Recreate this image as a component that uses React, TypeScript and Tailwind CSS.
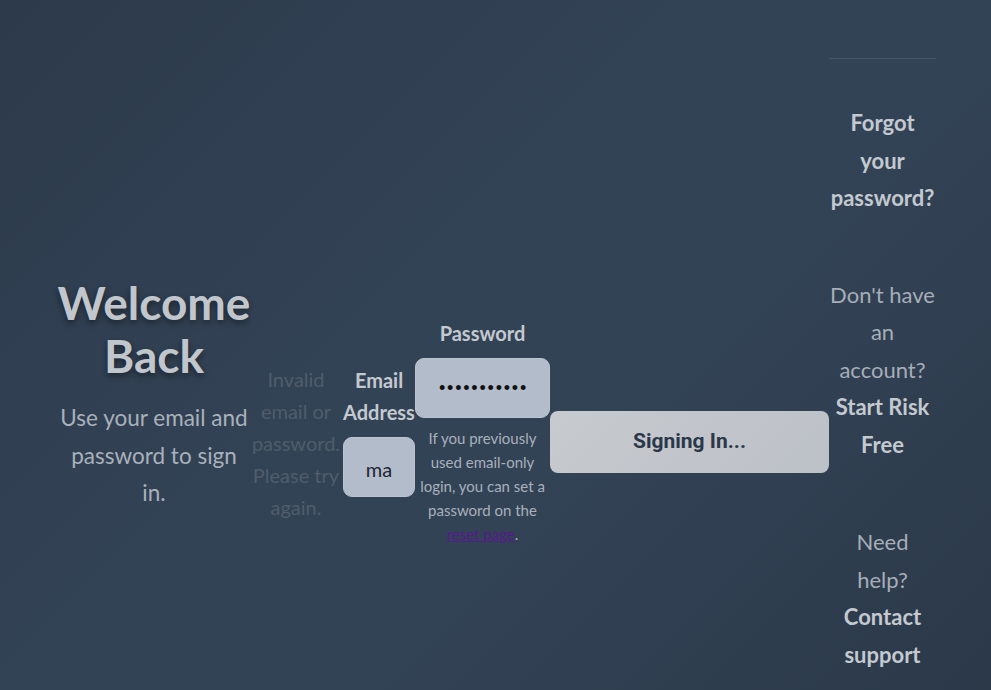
import React from "react";

export default function App() {
  const font = { fontFamily: 'Lato, "Open Sans", sans-serif' };
  return (
    <div
      className="w-[991px] h-[690px] overflow-hidden bg-[linear-gradient(135deg,#2c3a4b_0%,#334356_45%,#334356_60%,#2b3949_100%)]"
      style={font}
    >
      <div className="flex items-start h-full pl-[57px]">
        {/* Welcome */}
        <div className="w-[194px] mt-[276px] text-center shrink-0 flex flex-col items-center">
          <h1 className="text-[46px] leading-[53px] font-bold text-[#c1c6cd] [text-shadow:0_3px_6px_rgba(0,0,0,0.45)]">
            Welcome Back
          </h1>
          <p className="mt-[17px] w-[190px] text-[22.5px] leading-[37.5px] text-[#a9b1bb]">
            Use your email and password to sign in.
          </p>
        </div>

        {/* Error */}
        <div className="w-[90px] mt-[363px] shrink-0 text-center text-[20px] leading-[32px] text-[#4f5c6b]">
          Invalid email or password. Please try again.
        </div>

        {/* Email */}
        <div className="w-[72px] mt-[364px] ml-[2px] shrink-0 flex flex-col items-center">
          <label className="text-[20px] leading-[32px] font-bold text-[#c4c9d0] text-center whitespace-nowrap">
            Email
            <br />
            Address
          </label>
          <div className="mt-[9px] w-[72px] h-[60px] rounded-[9px] bg-[#b3bccb] border border-[#bcc3d0] flex items-center justify-center pt-[3px] text-[20px] text-[#1e2633]">
            ma
          </div>
        </div>

        {/* Password */}
        <div className="w-[135px] mt-[317px] shrink-0 flex flex-col items-center">
          <label className="text-[20px] leading-[32px] font-bold text-[#c4c9d0] text-center">
            Password
          </label>
          <div
            className="mt-[9px] w-[135px] h-[60px] rounded-[9px] bg-[#b3bccb] border border-[#bcc3d0] flex items-center justify-center pl-[2px] text-[18px] text-[#111] tracking-[1.8px]"
            style={{ fontFamily: '"Liberation Sans", Arial, sans-serif' }}
          >
            •••••••••••
          </div>
          <p className="mt-[8px] text-[15px] leading-[24px] text-[#a8b0bb] text-center">
            If you previously used email-only login, you can set a password on the{" "}
            <a className="underline text-[#551a8b]" href="#">
              reset page
            </a>
            <span className="text-[#a8b0bb]">.</span>
          </p>
        </div>

        {/* Button */}
        <button
          className="mt-[411px] w-[279px] h-[62px] shrink-0 rounded-[8px] bg-[linear-gradient(135deg,#c7cacf,#bcc1c7)] text-[#2b3849] text-[21px] font-bold"
          style={{ fontFamily: 'Roboto, "Liberation Sans", sans-serif' }}
        >
          Signing In...
        </button>

        {/* Right column */}
        <div className="w-[107px] mt-[58px] shrink-0 flex flex-col items-center text-center text-[22px] leading-[37.5px]">
          <div className="w-full h-px bg-[#465466]" />
          <a href="#" className="mt-[45px] font-bold text-[#c4c9d0]">
            Forgot your password?
          </a>
          <div className="mt-[59px] text-[#a6aeb8]">
            Don't have an account?{" "}
            <a href="#" className="font-bold text-[#c4c9d0]">
              Start Risk Free
            </a>
          </div>
          <div className="mt-[60px] text-[#a6aeb8]">
            Need help?{" "}
            <a href="#" className="font-bold text-[#c4c9d0]">
              Contact support
            </a>
          </div>
        </div>
      </div>
    </div>
  );
}
